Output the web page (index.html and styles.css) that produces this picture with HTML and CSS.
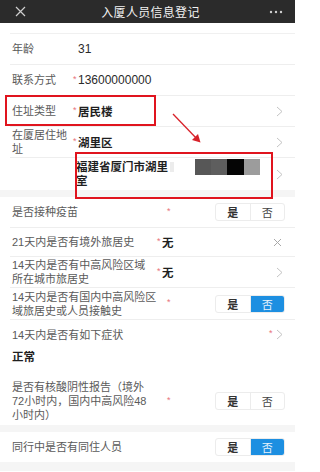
FILE: index.html
```html
<!DOCTYPE html>
<html lang="zh-CN">
<head>
<meta charset="utf-8">
<title>入厦人员信息登记</title>
<link rel="stylesheet" href="styles.css">
</head>
<body>
<div class="page">
  <header class="topbar">
    <svg class="close" width="11" height="11" viewBox="0 0 11 11"><path d="M1 1L10 10M10 1L1 10" stroke="#cfcfcf" stroke-width="1.2"/></svg>
    <span class="title">入厦人员信息登记</span>
    <svg class="more" width="14" height="4" viewBox="0 0 14 4"><circle cx="2" cy="2" r="1.2" fill="#cfcfcf"/><circle cx="7" cy="2" r="1.2" fill="#cfcfcf"/><circle cx="12" cy="2" r="1.2" fill="#cfcfcf"/></svg>
  </header>

  <div class="spacer"></div>

  <div class="row h30">
    <span class="lbl lbl-s">年龄</span>
    <span class="val plain pad">31</span>
  </div>
  <div class="row h30">
    <span class="lbl lbl-s">联系方式</span>
    <span class="star">*</span><span class="val plain">13600000000</span>
  </div>
  <div class="row h30">
    <span class="lbl lbl-s">住址类型</span>
    <span class="star">*</span><span class="val">居民楼</span>
    <span class="grow"></span>
    <svg class="chev" width="7" height="11" viewBox="0 0 7 11"><path d="M1 1L6 5.5L1 10" fill="none" stroke="#c4c4c4" stroke-width="1"/></svg>
  </div>
  <div class="row h30">
    <span class="lbl lbl-s lbl-wrap">在厦居住地<br>址</span>
    <span class="star">*</span><span class="val">湖里区</span>
    <span class="grow"></span>
    <svg class="chev" width="7" height="11" viewBox="0 0 7 11"><path d="M1 1L6 5.5L1 10" fill="none" stroke="#c4c4c4" stroke-width="1"/></svg>
  </div>
  <div class="row addr">
    <span class="addr-text">福建省厦门市湖里<span class="ghost"></span><br>室</span>
    <span class="mosaic"><i class="m1"></i><i class="m2"></i><i class="m3"></i><i class="m4"></i></span>
    <span class="grow"></span>
    <svg class="chev" width="7" height="11" viewBox="0 0 7 11"><path d="M1 1L6 5.5L1 10" fill="none" stroke="#c4c4c4" stroke-width="1"/></svg>
  </div>

  <div class="band"></div>

  <div class="row h30">
    <span class="lbl lbl-l">是否接种疫苗</span>
    <span class="star">*</span>
    <span class="grow"></span>
    <span class="seg"><span class="opt yes">是</span><span class="opt">否</span></span>
  </div>
  <div class="row h28">
    <span class="lbl lbl-m">21天内是否有境外旅居史</span>
    <span class="star">*</span><span class="val">无</span>
    <span class="grow"></span>
    <svg class="x" width="9" height="9" viewBox="0 0 9 9"><path d="M1 1L8 8M8 1L1 8" stroke="#a8a8a8" stroke-width="1"/></svg>
  </div>
  <div class="row h30">
    <span class="lbl lbl-m lbl-wrap">14天内是否有中高风险区域<br>所在城市旅居史</span>
    <span class="star">*</span><span class="val">无</span>
    <span class="grow"></span>
    <svg class="chev" width="7" height="11" viewBox="0 0 7 11"><path d="M1 1L6 5.5L1 10" fill="none" stroke="#c4c4c4" stroke-width="1"/></svg>
  </div>
  <div class="row h31">
    <span class="lbl lbl-l lbl-wrap">14天内是否有国内中高风险区<br>域旅居史或人员接触史</span>
    <span class="star">*</span>
    <span class="grow"></span>
    <span class="seg"><span class="opt yes">是</span><span class="opt on">否</span></span>
  </div>
  <div class="row h29 noline">
    <span class="lbl">14天内是否有如下症状</span>
    <span class="grow"></span>
    <span class="star star-r">*</span>
    <svg class="chev" width="7" height="11" viewBox="0 0 7 11"><path d="M1 1L6 5.5L1 10" fill="none" stroke="#c4c4c4" stroke-width="1"/></svg>
  </div>
  <div class="result">正常</div>

  <div class="row h48 noline">
    <span class="lbl lbl-l lbl-wrap">是否有核酸阴性报告（境外<br>72小时内，国内中高风险48<br>小时内）</span>
    <span class="star">*</span>
    <span class="grow"></span>
    <span class="seg"><span class="opt yes">是</span><span class="opt">否</span></span>
  </div>

  <div class="band"></div>

  <div class="row h30 noline">
    <span class="lbl">同行中是否有同住人员</span>
    <span class="grow"></span>
    <span class="seg"><span class="opt yes">是</span><span class="opt on">否</span></span>
  </div>

  <div class="band band-end"></div>

  <div class="mark mark-1"></div>
  <div class="mark mark-2"></div>
  <svg class="arrow" width="40" height="40" viewBox="0 0 40 40">
    <path d="M2 2L27 28" stroke="#d8222a" stroke-width="1.3" fill="none"/>
    <path d="M29.5 30.5L21 28L27 22Z" fill="#d8222a"/>
  </svg>
</div>
</body>
</html>
```

FILE: styles.css
```css
html, body {
  margin: 0;
  padding: 0;
  background: #ffffff;
}

.page {
  position: relative;
  width: 295px;
  height: 472px;
  overflow: hidden;
  font-family: "Liberation Sans", "Noto Sans CJK SC", sans-serif;
  font-size: 11px;
  color: #555;
}

.topbar {
  height: 23px;
  background: #2b2b2b;
  display: flex;
  align-items: center;
  justify-content: space-between;
  padding: 0 12px 0 15px;
}

.title {
  color: #f2f2f2;
  font-size: 12px;
  letter-spacing: 0.3px;
  margin-left: 6px;
}

.more {
  flex: none;
}

.spacer {
  height: 10px;
  margin-left: 10px;
  border-bottom: 1px solid #f0f0f0;
}

.row {
  display: flex;
  align-items: center;
  margin-left: 10px;
  padding: 0 12px 0 2px;
  border-bottom: 1px solid #eeeeee;
}

.noline {
  border-bottom: none;
}

.h28 { height: 28px; }
.h29 { height: 29px; }
.h30 { height: 30px; }
.h31 { height: 31px; }
.h48 { height: 48px; }

.lbl {
  color: #5a5a5a;
  line-height: 14px;
  white-space: nowrap;
  flex: none;
}

.lbl-s { width: 61px; }
.lbl-m { width: 145px; }
.lbl-l { width: 155px; }

.lbl-wrap {
  white-space: normal;
}

.star {
  color: #e8737a;
  font-size: 9px;
  width: 5px;
  margin-top: -3px;
  flex: none;
}

.star-r {
  margin-right: 2px;
}

.val {
  color: #1f1f1f;
  font-weight: 700;
  font-size: 11.5px;
}

.val.plain {
  font-weight: 400;
  font-size: 12px;
  color: #2a2a2a;
}

.val.pad {
  padding-left: 5px;
}

.grow {
  flex: 1;
}

.chev {
  flex: none;
}

.x {
  flex: none;
  margin-right: 1px;
}

.addr {
  height: 32px;
  border-bottom: none;
  padding-left: 66px;
}

.addr-text {
  color: #1f1f1f;
  font-weight: 700;
  font-size: 11.5px;
  line-height: 14px;
  width: 119px;
  flex: none;
}

.ghost {
  display: inline-block;
  width: 4px;
  height: 10px;
  margin-left: 2px;
  background: #ececec;
  vertical-align: -1px;
}

.mosaic {
  display: flex;
  height: 16px;
  margin-top: -15px;
  flex: none;
}

.mosaic i {
  display: block;
  height: 16px;
}

.m1 { width: 16px; background: #575757; }
.m2 { width: 16px; background: #5e5e5e; }
.m3 { width: 17px; background: #050505; }
.m4 { width: 16px; background: #9c9c9c; }

.band {
  height: 7px;
  background: #f5f5f5;
}

.band-end {
  height: 9px;
}

.seg {
  display: flex;
  width: 70px;
  height: 18px;
  border: 1px solid #ececec;
  border-radius: 3px;
  box-sizing: border-box;
  overflow: hidden;
  flex: none;
  margin-right: -2px;
}

.opt {
  flex: 1;
  display: flex;
  align-items: center;
  justify-content: center;
  color: #444;
  font-size: 11px;
}

.opt.yes {
  font-weight: 700;
  color: #333;
  border-right: 1px solid #ececec;
}

.opt.on {
  background: #1d8fe1;
  color: #e8f3fc;
}

.result {
  height: 16px;
  line-height: 16px;
  padding-left: 12px;
  margin-bottom: 12px;
  color: #1f1f1f;
  font-weight: 700;
  font-size: 11.5px;
}

.mark {
  position: absolute;
  border: 2px solid #e0141e;
  box-sizing: border-box;
}

.mark-1 {
  left: 5px;
  top: 95px;
  width: 151px;
  height: 31px;
}

.mark-2 {
  left: 75px;
  top: 152px;
  width: 198px;
  height: 47px;
}

.arrow {
  position: absolute;
  left: 171px;
  top: 112px;
}
```
